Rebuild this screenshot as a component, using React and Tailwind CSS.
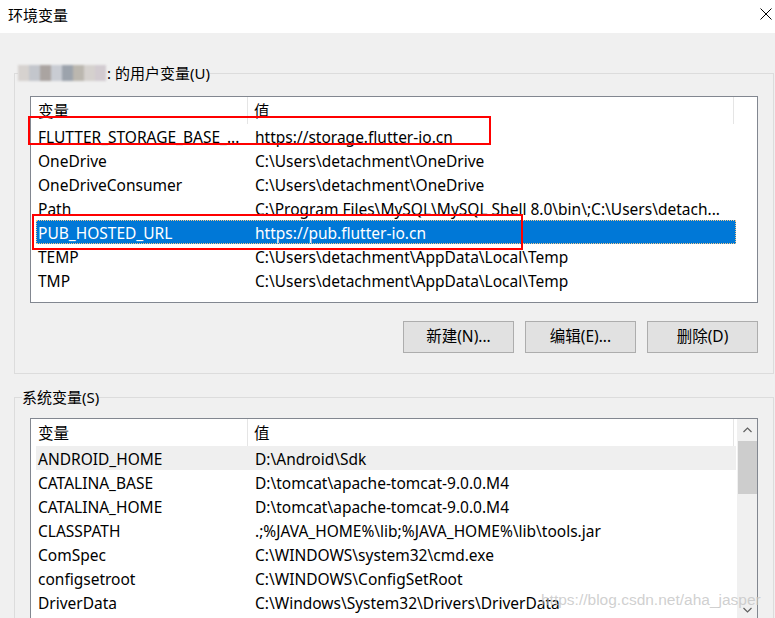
const userVars = [
  ['FLUTTER_STORAGE_BASE_...', 'https://storage.flutter-io.cn'],
  ['OneDrive', 'C:\\Users\\detachment\\OneDrive'],
  ['OneDriveConsumer', 'C:\\Users\\detachment\\OneDrive'],
  ['Path', 'C:\\Program Files\\MySQL\\MySQL Shell 8.0\\bin\\;C:\\Users\\detach...'],
  ['PUB_HOSTED_URL', 'https://pub.flutter-io.cn'],
  ['TEMP', 'C:\\Users\\detachment\\AppData\\Local\\Temp'],
  ['TMP', 'C:\\Users\\detachment\\AppData\\Local\\Temp'],
];

const sysVars = [
  ['ANDROID_HOME', 'D:\\Android\\Sdk'],
  ['CATALINA_BASE', 'D:\\tomcat\\apache-tomcat-9.0.0.M4'],
  ['CATALINA_HOME', 'D:\\tomcat\\apache-tomcat-9.0.0.M4'],
  ['CLASSPATH', '.;%JAVA_HOME%\\lib;%JAVA_HOME%\\lib\\tools.jar'],
  ['ComSpec', 'C:\\WINDOWS\\system32\\cmd.exe'],
  ['configsetroot', 'C:\\WINDOWS\\ConfigSetRoot'],
  ['DriverData', 'C:\\Windows\\System32\\Drivers\\DriverData'],
];

// pixelated blur standing in for the hidden user name
const blurColors = ['#d6d2cf', '#c3c6cc', '#aaa4a1', '#c9ccd3', '#9ca3ac', '#bbb7af', '#d5d1ce', '#d2cbd0'];

function Header() {
  return (
    <div className="flex h-[27px] pl-[5px] text-black">
      <div className="w-[212px] pl-[2px] pt-[2px] border-r border-[#e5e5e5] flex items-center">变量</div>
      <div className="w-[486px] pl-[6px] pt-[2px] border-r border-[#e5e5e5] flex items-center">值</div>
    </div>
  );
}

function Row({ name, value, selected, hover }) {
  const bg = selected
    ? 'bg-[#0078d7] text-white outline-1 outline-dotted outline-[#f5c98a] -outline-offset-1'
    : hover
      ? 'bg-[#efefef]'
      : '';
  return (
    <div className={`flex h-[24px] w-[700px] items-center whitespace-nowrap leading-[22px] pt-[1px] ${bg}`}>
      <div className="w-[217px] pl-[2px] overflow-hidden">{name}</div>
      <div className="flex-1 pl-[2px] overflow-hidden">{value}</div>
    </div>
  );
}

function Button({ children }) {
  return (
    <button className="w-[111px] h-[32px] bg-[#e1e1e1] border border-[#adadad] text-black flex items-center justify-center">
      {children}
    </button>
  );
}

export default function App() {
  return (
    <div
      className="relative w-[775px] h-[618px] overflow-hidden bg-[#f0f0f0] text-[15.5px] leading-none text-[#000]"
      style={{ fontFamily: '"Noto Sans", "Noto Sans CJK SC", sans-serif' }}
    >
      {/* Title bar */}
      <div className="h-[33px] bg-white flex items-center justify-between pl-[8px] pr-[2px]">
        <span className="-mt-[3px] text-[15px]">环境变量</span>
        <svg width="12" height="12" viewBox="0 0 12 12" className="mr-[1px] -mt-[6px]">
          <path d="M0.5 0.5 L11.5 11.5 M11.5 0.5 L0.5 11.5" stroke="#000" strokeWidth="1" />
        </svg>
      </div>

      <div className="pl-[14px] pr-[1px]">
        {/* User variables */}
        <fieldset className="mt-[31px] h-[310px] border border-[#dcdcdc] px-[15px]">
          <legend className="-ml-[12px] flex items-center h-[18px] text-[15px]">
            <span className="flex items-center blur-[1.2px] mr-[1px]">
              {blurColors.map((c, i) => (
                <span key={i} className="inline-block w-[11px] h-[16px]" style={{ background: c }} />
              ))}
            </span>
            <span>: 的用户变量(U)</span>
          </legend>
          <div className="mt-[14px] h-[207px] bg-white border border-[#828790]">
            <Header />
            <div className="pl-[5px]">
              {userVars.map(([n, v], i) => (
                <Row key={n} name={n} value={v} selected={i === 4} />
              ))}
            </div>
          </div>
          <div className="mt-[18px] flex justify-end gap-[11px]">
            <Button>新建(N)...</Button>
            <Button>编辑(E)...</Button>
            <Button>删除(D)</Button>
          </div>
        </fieldset>

        {/* System variables */}
        <fieldset className="mt-[14px] h-[260px] border border-[#dcdcdc] px-[15px]">
          <legend className="-ml-[8px] h-[18px] flex items-center text-[15px]">系统变量(S)</legend>
          <div className="mt-[12px] h-[204px] bg-white border border-[#828790] flex">
            <div className="flex-1 overflow-hidden">
              <Header />
              <div className="pl-[5px]">
                {sysVars.map(([n, v], i) => (
                  <Row key={n} name={n} value={v} hover={i === 0} />
                ))}
              </div>
            </div>
            <div className="w-[20px] bg-[#f0f0f0] flex flex-col items-center">
              <div className="h-[22px] flex items-center justify-center">
                <svg width="9" height="6" viewBox="0 0 9 6">
                  <path d="M0.5 5 L4.5 1 L8.5 5" fill="none" stroke="#606060" strokeWidth="1.2" />
                </svg>
              </div>
              <div className="w-[19px] h-[53px] bg-[#cdcdcd]" />
              <div className="flex-1" />
              <div className="h-[22px] flex items-center justify-center">
                <svg width="9" height="6" viewBox="0 0 9 6">
                  <path d="M0.5 1 L4.5 5 L8.5 1" fill="none" stroke="#606060" strokeWidth="1.2" />
                </svg>
              </div>
            </div>
          </div>
        </fieldset>
      </div>

      {/* Red annotation boxes */}
      <div className="absolute left-[28px] top-[116px] w-[463px] h-[29px] border-[2px] border-[#ff0000]" />
      <div className="absolute left-[32px] top-[214px] w-[491px] h-[36px] border-[2px] border-[#ff0000]" />

      {/* Watermark */}
      <div
        className="absolute left-[541px] top-[592px] text-[15.5px] text-[#c4c4c4]/80 whitespace-nowrap"
        style={{ fontFamily: '"Liberation Sans", Arial, sans-serif' }}
      >
        https://blog.csdn.net/aha_jasper
      </div>
    </div>
  );
}
